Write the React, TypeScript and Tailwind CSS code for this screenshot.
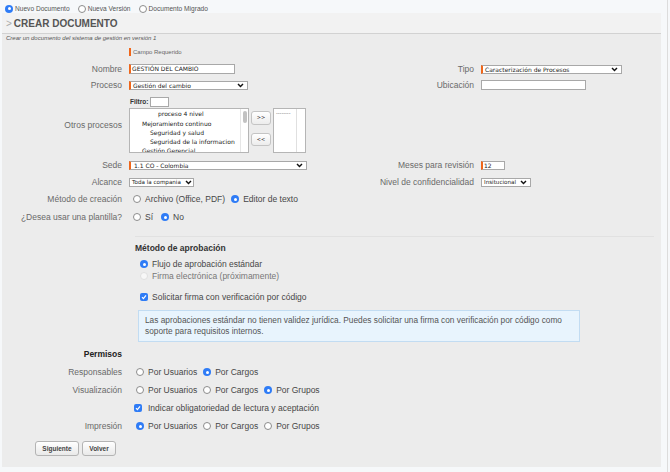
import React from 'react';

const SANS = "font-['Liberation_Sans',Arial,sans-serif]";
const VER = "font-['DejaVu_Sans',Verdana,sans-serif]";
const LBL = "text-[8.5px] text-[#6a6a6a] leading-[10px] whitespace-nowrap";
const OPT = "text-[8.5px] text-[#474747] leading-[10px] whitespace-nowrap";

function Radio({ checked = false, disabled = false }: { checked?: boolean; disabled?: boolean }) {
  if (checked) {
    return (
      <span className="inline-flex w-[8px] h-[8px] rounded-full bg-[#2f7cf6] items-center justify-center shrink-0">
        <span className="w-[3px] h-[3px] rounded-full bg-white" />
      </span>
    );
  }
  return (
    <span
      className={
        disabled
          ? 'inline-block w-[8px] h-[8px] rounded-full border border-[#e0e0e0] bg-[#f7f7f7] shrink-0'
          : 'inline-block w-[8px] h-[8px] rounded-full border border-[#8c8c8c] bg-white shrink-0'
      }
    />
  );
}

function Check() {
  return (
    <span className="inline-flex w-[8px] h-[8px] rounded-[2px] bg-[#2f7cf6] items-center justify-center shrink-0">
      <svg width="6" height="6" viewBox="0 0 6 6">
        <path d="M1 3.2 L2.4 4.6 L5 1.3" stroke="white" strokeWidth="1.2" fill="none" />
      </svg>
    </span>
  );
}

function Chevron() {
  return (
    <svg width="7" height="5" viewBox="0 0 7 5" className="shrink-0">
      <path d="M1 1 L3.5 3.6 L6 1" stroke="#111" strokeWidth="1.4" fill="none" />
    </svg>
  );
}

function Opt({ label, checked = false, disabled = false }: { label: string; checked?: boolean; disabled?: boolean }) {
  return (
    <span className="inline-flex items-center mr-[6px]">
      <Radio checked={checked} disabled={disabled} />
      <span className={`ml-[4px] ${disabled ? 'text-[8.5px] text-[#777] leading-[10px] whitespace-nowrap' : OPT}`}>{label}</span>
    </span>
  );
}

export default function App() {
  return (
    <div className={`${SANS} w-[670px] h-[472px] bg-[#f6f8fa] overflow-hidden flex`}>
      <div className="w-[665px] flex flex-col">
        {/* top radios */}
        <div className="h-[13px] pt-[4px] pl-[5px] flex items-center">
          <span className="inline-flex items-center mr-[8px]">
            <Radio checked />
            <span className="ml-[2px] text-[6.6px] text-[#555] leading-[8px]">Nuevo Documento</span>
          </span>
          <span className="inline-flex items-center mr-[8px]">
            <Radio />
            <span className="ml-[2px] text-[6.6px] text-[#555] leading-[8px]">Nueva Versión</span>
          </span>
          <span className="inline-flex items-center">
            <Radio />
            <span className="ml-[2px] text-[6.6px] text-[#555] leading-[8px]">Documento Migrado</span>
          </span>
        </div>

        {/* panel */}
        <div className="ml-[2px] w-[659px] flex flex-col bg-[#ececec]">
          <div className="h-[21px] pt-[2px] bg-[#f2f2f2] border-b border-[#d2d2d2] flex items-center pl-[4px]">
            <span className="text-[10px] text-[#aaa] leading-none mr-[2px]">&gt;</span>
            <span className="text-[10px] font-bold text-[#555] leading-none">CREAR DOCUMENTO</span>
          </div>

          <div className="flex flex-col pb-[11px]">
            <div className="h-[7px] pl-[4px] flex items-center">
              <span className="text-[6px] italic text-[#555] leading-none">
                Crear un documento del sistema de gestión en versión 1
              </span>
            </div>

            <div className="mt-[6px] h-[10px] flex items-center pl-[127px]">
              <span className="w-[2px] h-[8px] bg-[#f0661a]" />
              <span className="ml-[2px] text-[6px] text-[#666] leading-none">Campo Requerido</span>
            </div>

            {/* Nombre / Tipo */}
            <div className="mt-[7px] h-[10px] flex items-center">
              <div className={`w-[120px] text-right ${LBL}`}>Nombre</div>
              <div className="ml-[7px] w-[211px] flex items-center">
                <div className={`${VER} w-[106px] h-[10px] bg-white border border-[#a8a8a8] border-l-2 border-l-[#f0661a] text-[6px] text-[#222] leading-[8px] pl-[1px]`}>
                  GESTIÓN DEL CAMBIO
                </div>
              </div>
              <div className={`w-[134px] text-right ${LBL}`}>Tipo</div>
              <div className="ml-[7px]">
                <div className={`${VER} w-[141px] h-[9px] bg-white border border-[#a8a8a8] border-l-2 border-l-[#f0661a] text-[6px] text-[#222] leading-[7px] pl-[2px] pr-[3px] flex items-center justify-between`}>
                  <span>Caracterización de Procesos</span>
                  <Chevron />
                </div>
              </div>
            </div>

            {/* Proceso / Ubicación */}
            <div className="mt-[6px] h-[10px] flex items-center">
              <div className={`w-[120px] text-right ${LBL}`}>Proceso</div>
              <div className="ml-[7px] w-[211px] flex items-center">
                <div className={`${VER} w-[119px] h-[9px] bg-white border border-[#a8a8a8] border-l-2 border-l-[#f0661a] text-[6px] text-[#222] leading-[7px] pl-[2px] pr-[3px] flex items-center justify-between`}>
                  <span>Gestión del cambio</span>
                  <Chevron />
                </div>
              </div>
              <div className={`w-[134px] text-right ${LBL}`}>Ubicación</div>
              <div className="ml-[7px]">
                <div className="w-[105px] h-[10px] bg-white border border-[#a8a8a8]" />
              </div>
            </div>

            {/* Otros procesos */}
            <div className="mt-[7px] h-[56px] flex items-center">
              <div className={`w-[120px] text-right ${LBL}`}>Otros procesos</div>
              <div className="ml-[7px] flex flex-col">
                <div className="h-[10px] flex items-center pl-[1px]">
                  <span className="text-[6.5px] font-bold text-[#333] leading-none">Filtro:</span>
                  <span className="ml-[2px] w-[19px] h-[10px] bg-white border border-[#a8a8a8]" />
                </div>
                <div className="mt-[1px] flex">
                  <div className={`${VER} w-[120px] h-[45px] bg-white border border-[#b5b5b5] flex overflow-hidden`}>
                    <div className="flex-1 overflow-hidden text-[6px] text-[#222] leading-[9.3px]">
                      <div className="-mt-[9px]">
                        <div className="pl-[40px]">proceso 3 nivel</div>
                        <div className="pl-[28px]">proceso 4 nivel</div>
                        <div className="pl-[12px]">Mejoramiento continuo</div>
                        <div className="pl-[20px]">Seguridad y salud</div>
                        <div className="pl-[20px]">Seguridad de la informacion</div>
                        <div className="pl-[12px]">Gestión Gerencial</div>
                      </div>
                    </div>
                    <div className="w-[8px] border-l border-[#e6e6e6] flex justify-center pt-[2px]">
                      <span className="w-[4px] h-[12px] rounded-full bg-[#c2c2c2]" />
                    </div>
                  </div>
                  <div className="w-[24px] flex flex-col items-center pt-[3px]">
                    <div className={`${VER} w-[20px] h-[14px] rounded-[3px] border border-[#c4c4c4] bg-gradient-to-b from-white to-[#ececec] text-[5px] text-[#333] flex items-center justify-center`}>&gt;&gt;</div>
                    <div className={`${VER} mt-[8px] w-[20px] h-[13px] rounded-[3px] border border-[#c4c4c4] bg-gradient-to-b from-white to-[#ececec] text-[5px] text-[#333] flex items-center justify-center`}>&lt;&lt;</div>
                  </div>
                  <div className="w-[33px] h-[45px] bg-white border border-[#b5b5b5] flex">
                    <div className={`${VER} flex-1 text-[5px] text-[#555] leading-[6px] pl-[2px] pt-[1px]`}>--------</div>
                    <div className="w-[9px] border-l border-[#e0e0e0]" />
                  </div>
                </div>
              </div>
            </div>

            {/* Sede / Meses */}
            <div className="mt-[7px] h-[10px] flex items-center">
              <div className={`w-[120px] text-right ${LBL}`}>Sede</div>
              <div className="ml-[7px] w-[211px] flex items-center">
                <div className={`${VER} w-[178px] h-[9px] bg-white border border-[#a8a8a8] border-l-2 border-l-[#f0661a] text-[6px] text-[#222] leading-[7px] pl-[3px] pr-[3px] flex items-center justify-between`}>
                  <span>1.1 CO - Colombia</span>
                  <Chevron />
                </div>
              </div>
              <div className={`w-[134px] text-right ${LBL}`}>Meses para revisión</div>
              <div className="ml-[7px]">
                <div className={`${VER} w-[24px] h-[9px] bg-white border border-[#a8a8a8] border-l-2 border-l-[#f0661a] text-[6px] text-[#222] leading-[7px] pl-[1px]`}>12</div>
              </div>
            </div>

            {/* Alcance / Nivel */}
            <div className="mt-[7px] h-[10px] flex items-center">
              <div className={`w-[120px] text-right ${LBL}`}>Alcance</div>
              <div className="ml-[7px] w-[211px] flex items-center">
                <div className={`${VER} w-[65px] h-[9px] bg-white border border-[#a8a8a8] text-[5.6px] text-[#222] leading-[7px] pl-[2px] pr-[1px] flex items-center justify-between`}>
                  <span>Toda la compania</span>
                  <Chevron />
                </div>
              </div>
              <div className={`w-[134px] text-right ${LBL}`}>Nivel de confidencialidad</div>
              <div className="ml-[7px]">
                <div className={`${VER} w-[50px] h-[9px] bg-white border border-[#a8a8a8] text-[5.6px] text-[#222] leading-[7px] pl-[2px] pr-[3px] flex items-center justify-between`}>
                  <span>Insitucional</span>
                  <Chevron />
                </div>
              </div>
            </div>

            {/* Método de creación */}
            <div className="mt-[7px] h-[10px] flex items-center">
              <div className={`w-[120px] text-right ${LBL}`}>Método de creación</div>
              <div className="ml-[11px] flex items-center">
                <Opt label="Archivo (Office, PDF)" />
                <Opt label="Editor de texto" checked />
              </div>
            </div>

            {/* Plantilla */}
            <div className="mt-[8px] h-[10px] flex items-center">
              <div className={`w-[120px] text-right ${LBL}`}>¿Desea usar una plantilla?</div>
              <div className="ml-[11px] flex items-center">
                <Opt label="Sí" />
                <span className="ml-[2px]" />
                <Opt label="No" checked />
              </div>
            </div>

            <div className="mt-[14px] ml-[133px] mr-[7px] h-[1px] bg-[#e1e1e1]" />

            <div className="mt-[6px] h-[10px] flex items-center pl-[133px]">
              <span className="text-[8.5px] font-bold text-[#333] leading-[10px]">Método de aprobación</span>
            </div>
            <div className="mt-[6px] h-[10px] flex items-center pl-[138px]">
              <Opt label="Flujo de aprobación estándar" checked />
            </div>
            <div className="mt-[2px] h-[10px] flex items-center pl-[138px]">
              <Opt label="Firma electrónica (próximamente)" disabled />
            </div>
            <div className="mt-[11px] h-[10px] flex items-center pl-[138px]">
              <Check />
              <span className={`ml-[4px] ${OPT}`}>Solicitar firma con verificación por código</span>
            </div>

            <div className="mt-[8px] ml-[136px] w-[442px] h-[32px] bg-[#e8f4fd] border border-[#c2dcf2] flex flex-col justify-center pl-[6px]">
              <span className="text-[8.3px] text-[#555] leading-[11px] whitespace-nowrap">
                Las aprobaciones estándar no tienen validez jurídica. Puedes solicitar una firma con verificación por código como
              </span>
              <span className="text-[8.3px] text-[#555] leading-[11px] whitespace-nowrap">soporte para requisitos internos.</span>
            </div>

            <div className="mt-[7px] h-[10px] flex items-center">
              <div className="w-[120px] text-right text-[8.5px] font-bold text-[#222] leading-[10px]">Permisos</div>
            </div>

            <div className="mt-[8px] h-[10px] flex items-center">
              <div className={`w-[120px] text-right ${LBL}`}>Responsables</div>
              <div className="ml-[14px] flex items-center">
                <Opt label="Por Usuarios" />
                <Opt label="Por Cargos" checked />
              </div>
            </div>
            <div className="mt-[8px] h-[10px] flex items-center">
              <div className={`w-[120px] text-right ${LBL}`}>Visualización</div>
              <div className="ml-[14px] flex items-center">
                <Opt label="Por Usuarios" />
                <Opt label="Por Cargos" />
                <Opt label="Por Grupos" checked />
              </div>
            </div>
            <div className="mt-[8px] h-[10px] flex items-center pl-[132px]">
              <Check />
              <span className={`ml-[6px] ${OPT}`}>Indicar obligatoriedad de lectura y aceptación</span>
            </div>
            <div className="mt-[8px] h-[10px] flex items-center">
              <div className={`w-[120px] text-right ${LBL}`}>Impresión</div>
              <div className="ml-[14px] flex items-center">
                <Opt label="Por Usuarios" checked />
                <Opt label="Por Cargos" />
                <Opt label="Por Grupos" />
              </div>
            </div>

            <div className="mt-[10px] h-[15px] flex items-center pl-[33px] gap-[3px]">
              <div className="w-[44px] h-[15px] rounded-[3px] border border-[#b4b4b4] bg-gradient-to-b from-white to-[#e9e9e9] flex items-center justify-center text-[6.5px] font-bold text-[#444]">Siguiente</div>
              <div className="w-[34px] h-[15px] rounded-[3px] border border-[#b4b4b4] bg-gradient-to-b from-white to-[#e9e9e9] flex items-center justify-center text-[6.5px] font-bold text-[#444]">Volver</div>
            </div>
          </div>
        </div>
      </div>
      <div className="w-[1px] h-full bg-[#dcdcdc] ml-[2px]" />
    </div>
  );
}
